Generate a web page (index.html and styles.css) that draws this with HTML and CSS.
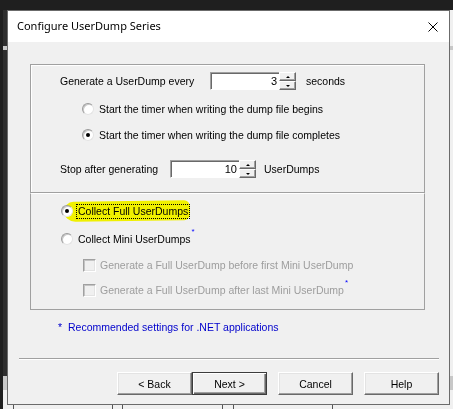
FILE: index.html
```html
<!DOCTYPE html>
<html>
<head>
<meta charset="utf-8">
<title>Configure UserDump Series</title>
<link rel="stylesheet" href="styles.css">
</head>
<body>
<div class="desk">
  <div class="bgwin">
    <div class="bg-side"></div>
    <div class="bg-line"></div>
    <div class="bg-band"></div>
    <div class="bg-cols"><span class="c1"></span><span class="c2"></span><span class="c3"></span><span class="c4"></span><span class="c5"></span><span class="c6"></span></div>
  </div>

  <div class="dialog">
    <div class="titlebar">
      <span class="title">Configure UserDump Series</span>
      <svg class="close" width="10" height="10" viewBox="0 0 10 10"><path d="M0.5 0.5 L9.5 9.5 M9.5 0.5 L0.5 9.5" stroke="#000" stroke-width="1" fill="none"/></svg>
    </div>

    <div class="content">
      <div class="group g1">
        <div class="row r1">
          <span class="lbl lbl-every">Generate a UserDump every</span>
          <span class="spin s1"><span class="field">3</span><span class="arrows"><span class="up"></span><span class="dn"></span></span></span>
          <span class="unit u1">seconds</span>
        </div>
        <div class="opt r2"><span class="radio"></span><span class="txt">Start the timer when writing the dump file begins</span></div>
        <div class="opt r3"><span class="radio on"></span><span class="txt">Start the timer when writing the dump file completes</span></div>
        <div class="row r4">
          <span class="lbl lbl-stop">Stop after generating</span>
          <span class="spin s2"><span class="field">10</span><span class="arrows"><span class="up"></span><span class="dn"></span></span></span>
          <span class="unit u2">UserDumps</span>
        </div>
      </div>

      <div class="group g2">
        <div class="marker"></div>
        <div class="opt o1"><span class="radio on"></span><span class="txt focus">Collect Full UserDumps</span></div>
        <div class="opt o2"><span class="radio"></span><span class="txt">Collect Mini UserDumps</span><span class="ast">*</span></div>
        <div class="opt o3 dis"><span class="check"></span><span class="txt">Generate a Full UserDump before first Mini UserDump</span></div>
        <div class="opt o4 dis"><span class="check"></span><span class="txt">Generate a Full UserDump after last Mini UserDump</span><span class="ast">*</span></div>
      </div>

      <div class="note"><span class="nast">*</span><span>Recommended settings for .NET applications</span></div>

      <div class="sep"></div>

      <div class="buttons">
        <span class="btn">&lt; Back</span>
        <span class="btn def">Next &gt;</span>
        <span class="btn gap">Cancel</span>
        <span class="btn gap">Help</span>
      </div>
    </div>
  </div>
</div>
</body>
</html>
```

FILE: styles.css
```css
html, body {
  margin: 0;
  padding: 0;
}
body {
  width: 453px;
  height: 409px;
  overflow: hidden;
  background: #1f1f1f;
  font-family: "Liberation Sans", Arial, sans-serif;
  font-size: 10.5px;
  color: #000;
}
.desk {
  position: relative;
  width: 453px;
  height: 409px;
}

/* background application window */
.bgwin {
  position: absolute;
  left: 3px;
  top: 10px;
  right: 0;
  bottom: 0;
  background: #f0f0f0;
}
.bg-side {
  position: absolute;
  left: 0;
  top: 0;
  width: 4px;
  height: 366px;
  background: #2e2e2e;
}
.bg-line {
  position: absolute;
  left: 0;
  right: 0;
  top: 36px;
  height: 4px;
  background: #c8c8c8;
}
.bg-band {
  position: absolute;
  left: 0;
  right: 0;
  top: 366px;
  height: 14px;
  background: #c8c8c8;
}
.bg-cols span {
  position: absolute;
  top: 393px;
  height: 10px;
  width: 1px;
  background: #555;
}
.bg-cols .c1 { left: 10px; }
.bg-cols .c2 { left: 109px; }
.bg-cols .c3 { left: 119px; }
.bg-cols .c4 { left: 219px; }
.bg-cols .c5 { left: 230px; }
.bg-cols .c6 { left: 329px; }

/* dialog window */
.dialog {
  position: absolute;
  left: 7px;
  top: 10px;
  width: 443px;
  height: 395px;
  box-sizing: border-box;
  border: 1px solid #6b6b6b;
  background: #f0f0f0;
  display: flex;
  flex-direction: column;
}
.titlebar {
  height: 31px;
  background: #fff;
  display: flex;
  align-items: center;
  padding: 0 11px 0 9px;
  flex: none;
}
.title {
  font-family: "Noto Sans", "Open Sans", sans-serif;
  font-size: 11px;
  color: #000;
  flex: 1;
  position: relative;
  top: -1px;
}
.close {
  display: block;
}

.content {
  flex: 1;
  display: flex;
  flex-direction: column;
}

/* group boxes */
.group {
  margin-left: 22px;
  width: 395px;
  box-sizing: border-box;
  border: 1px solid #a0a0a0;
  display: flex;
  flex-direction: column;
  position: relative;
}
.g1 {
  margin-top: 22px;
  height: 129px;
  box-shadow: inset 1px 1px 0 #fff;
}
.g2 {
  height: 117px;
  border-top: 1px solid #fff;
}

.row {
  display: flex;
  align-items: center;
  height: 18px;
  padding-left: 29px;
}
.opt {
  display: flex;
  align-items: center;
  height: 16px;
}
.r1 { margin-top: 7px; }
.r2 { margin-top: 11px; padding-left: 51px; }
.r3 { margin-top: 10px; padding-left: 51px; }
.r4 { margin-top: 17px; }

.lbl-every { width: 150px; }
.lbl-stop { width: 110px; }
.u1 { margin-left: 10px; }
.u2 { margin-left: 8px; }

.spin {
  display: flex;
  height: 18px;
}
.s1 .field { width: 69px; }
.s2 .field { width: 69px; }
.field {
  box-sizing: border-box;
  height: 18px;
  background: #fff;
  border-top: 1px solid #a0a0a0;
  border-left: 1px solid #a0a0a0;
  border-bottom: 1px solid #fff;
  box-shadow: inset 1px 1px 0 #696969;
  text-align: right;
  padding-right: 2px;
  line-height: 16px;
  font-size: 11px;
}
.arrows {
  width: 17px;
  height: 18px;
  display: flex;
  flex-direction: column;
}
.arrows span {
  flex: 1;
  box-sizing: border-box;
  background: #f0f0f0;
  border: 1px solid;
  border-color: #fff #696969 #696969 #fff;
  box-shadow: inset -1px -1px 0 #a0a0a0;
  position: relative;
}
.arrows span::after {
  content: "";
  position: absolute;
  left: 6px;
  top: 3px;
  width: 0;
  height: 0;
  border-left: 2px solid transparent;
  border-right: 2px solid transparent;
}
.arrows .up::after {
  border-bottom: 2px solid #000;
}
.arrows .dn::after {
  border-top: 2px solid #000;
}

/* radios */
.radio {
  width: 12px;
  height: 12px;
  box-sizing: border-box;
  border-radius: 50%;
  border: 1px solid;
  border-color: #9a9a9a #e3e3e3 #e3e3e3 #9a9a9a;
  background: #fff;
  box-shadow: inset 1px 1px 0 #c8c8c8;
  flex: none;
  position: relative;
  margin-right: 5px;
}
.radio.on::after {
  content: "";
  position: absolute;
  left: 3px;
  top: 3px;
  width: 4px;
  height: 4px;
  border-radius: 50%;
  background: #000;
}

/* checkboxes */
.check {
  width: 13px;
  height: 13px;
  box-sizing: border-box;
  border: 1px solid;
  border-color: #a0a0a0 #fff #fff #a0a0a0;
  box-shadow: inset 1px 1px 0 #c4c4c4, inset -1px -1px 0 #e3e3e3;
  background: #f0f0f0;
  flex: none;
  margin-right: 4px;
}

.o1 { margin-top: 9px; padding-left: 30px; }
.o2 { margin-top: 12px; padding-left: 30px; }
.o3 { margin-top: 10px; padding-left: 52px; }
.o4 { margin-top: 9px; padding-left: 52px; }
.dis .txt { color: #9d9d9d; }

.focus {
  outline: 1px dotted #000;
  padding: 0 1px;
  margin-left: -1px;
  line-height: 13px;
}
.marker {
  position: absolute;
  left: 33px;
  top: 7px;
  width: 126px;
  height: 20px;
  background: #ffff00;
  mix-blend-mode: multiply;
  border-radius: 10px 6px 6px 12px / 10px 7px 7px 11px;
  transform: rotate(-0.8deg);
}
.ast {
  color: #0000ff;
  font-size: 8px;
  align-self: flex-start;
  margin-left: 1px;
  margin-top: -4px;
}

/* note */
.note {
  margin-top: 10px;
  height: 14px;
  display: flex;
  align-items: center;
  padding-left: 50px;
  color: #0000cc;
}
.nast {
  width: 10px;
}

.sep {
  margin: 24px 10px 0 11px;
  height: 1px;
  background: #a0a0a0;
  border-bottom: 1px solid #fff;
}

.buttons {
  margin-top: 12px;
  display: flex;
  justify-content: flex-end;
  padding-right: 10px;
}
.btn {
  width: 75px;
  height: 23px;
  box-sizing: border-box;
  background: #f0f0f0;
  border: 1px solid;
  border-color: #fff #696969 #696969 #fff;
  box-shadow: inset -1px -1px 0 #a0a0a0, inset 1px 1px 0 #e3e3e3;
  display: flex;
  align-items: center;
  justify-content: center;
}
.btn.def {
  border-color: #3c3c3c;
  box-shadow: inset 1px 1px 0 #fff, inset -1px -1px 0 #696969, inset -2px -2px 0 #a0a0a0;
}
.btn.gap {
  margin-left: 11px;
}
```
